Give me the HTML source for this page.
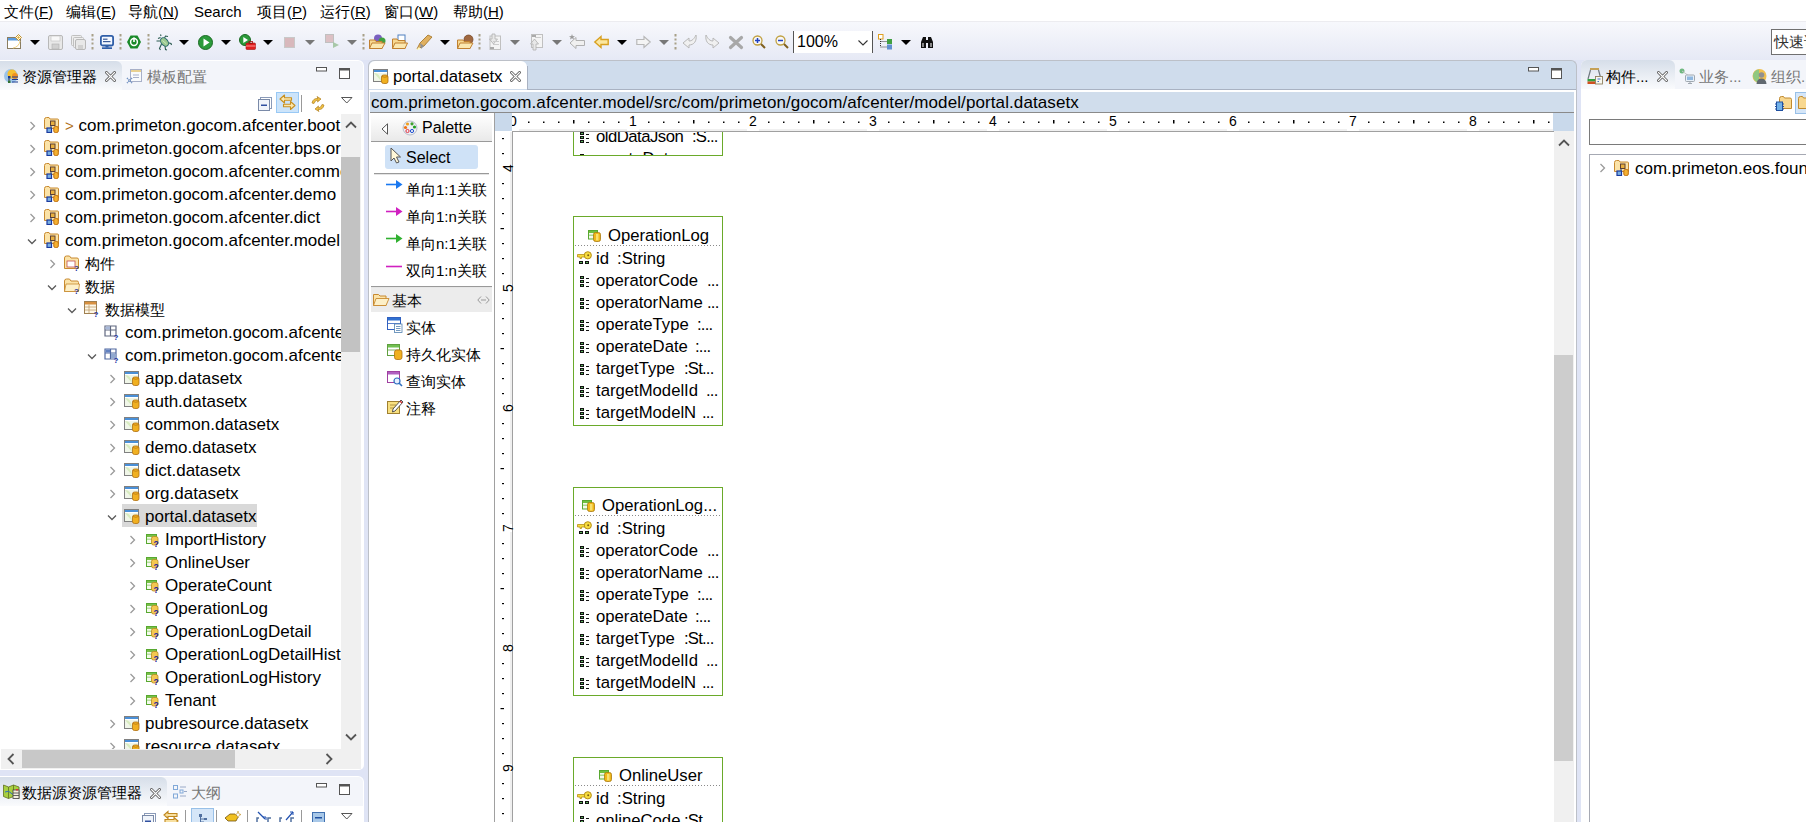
<!DOCTYPE html>
<html><head><meta charset="utf-8"><style>
*{margin:0;padding:0;box-sizing:border-box}
html,body{width:1806px;height:822px;overflow:hidden}
body{position:relative;background:#dfe4f5;font-family:"Liberation Sans",sans-serif;color:#000}
.a{position:absolute}
.t{position:absolute;white-space:nowrap}
svg{overflow:visible}
</style></head><body>
<div class="a" style="left:0px;top:0px;width:1806px;height:22px;background:#fff"></div>
<div class="a" style="left:0px;top:21px;width:1806px;height:1px;background:#ececf0"></div>
<div class="t" style="left:4px;top:4px;font-size:15px;line-height:15px;color:#000;">文件(<u>F</u>)</div>
<div class="t" style="left:66px;top:4px;font-size:15px;line-height:15px;color:#000;">编辑(<u>E</u>)</div>
<div class="t" style="left:128px;top:4px;font-size:15px;line-height:15px;color:#000;">导航(<u>N</u>)</div>
<div class="t" style="left:194px;top:4px;font-size:15px;line-height:15px;color:#000;">Search</div>
<div class="t" style="left:257px;top:4px;font-size:15px;line-height:15px;color:#000;">项目(<u>P</u>)</div>
<div class="t" style="left:320px;top:4px;font-size:15px;line-height:15px;color:#000;">运行(<u>R</u>)</div>
<div class="t" style="left:384px;top:4px;font-size:15px;line-height:15px;color:#000;">窗口(<u>W</u>)</div>
<div class="t" style="left:453px;top:4px;font-size:15px;line-height:15px;color:#000;">帮助(<u>H</u>)</div>
<div class="a" style="left:0px;top:22px;width:1806px;height:38px;background:linear-gradient(#f7f8fc,#e6e9f5)"></div>
<svg class="a" style="left:7px;top:34px" width="16" height="16" viewBox="0 0 16 16"><rect x="0.5" y="3.5" width="13" height="11" fill="#fff" stroke="#8a7d60"/><rect x="1" y="4" width="12" height="2.5" fill="#5b9be0"/><path d="M6 14 Q12 13 13 7" stroke="#f0d080" fill="none"/><path d="M11.5 0.5L14.5 3.5L11.5 6.5L8.5 3.5Z" fill="#fff8e0" stroke="#c09030" stroke-width="1"/><path d="M11.5 2V5M10 3.5H13" stroke="#e0b040" stroke-width=".8"/></svg>
<svg class="a" style="left:30px;top:40px" width="10" height="6" viewBox="0 0 10 6"><path d="M0 0H10L5 5Z" fill="#000"/></svg>
<svg class="a" style="left:48px;top:35px" width="15" height="15" viewBox="0 0 15 15"><rect x="0.5" y="0.5" width="14" height="14" rx="1.5" fill="#e8e8e8" stroke="#b8b8b8"/><rect x="3" y="1" width="9" height="5" fill="#f8f8f8" stroke="#c0c0c0" stroke-width=".6"/><rect x="4" y="9" width="7" height="5" fill="#d0d0d0" stroke="#b0b0b0" stroke-width=".6"/></svg>
<svg class="a" style="left:71px;top:35px" width="15" height="15" viewBox="0 0 15 15"><rect x="0.5" y="0.5" width="10" height="10" rx="1" fill="#eee" stroke="#c0c0c0"/><rect x="2.5" y="2.5" width="10" height="10" rx="1" fill="#eee" stroke="#c0c0c0"/><rect x="4.5" y="4.5" width="10" height="10" rx="1.5" fill="#e8e8e8" stroke="#b8b8b8"/><rect x="7" y="10" width="5" height="4" fill="#d0d0d0"/></svg>
<svg class="a" style="left:91px;top:34px" width="3" height="16" viewBox="0 0 3 16"><rect x="0.5" y="0" width="2" height="2.5" fill="#a8a088"/><rect x="0.5" y="4.5" width="2" height="2" fill="#a8a088"/><rect x="0.5" y="8.5" width="2" height="2" fill="#a8a088"/><rect x="0.5" y="13" width="2" height="2.5" fill="#a8a088"/></svg>
<svg class="a" style="left:100px;top:35px" width="14" height="14" viewBox="0 0 14 14"><rect x="0.9" y="0.9" width="12.2" height="9.6" rx="1.8" fill="#f4f8ff" stroke="#2f5ea8" stroke-width="1.8"/><rect x="3" y="3.6" width="4.5" height="1.2" fill="#3a5a98"/><rect x="3" y="6" width="7.5" height="1.2" fill="#3a5a98"/><rect x="5.5" y="11" width="3" height="1.5" fill="#2f5ea8"/><rect x="2" y="12.3" width="10" height="1.7" fill="#2f5ea8"/></svg>
<svg class="a" style="left:119px;top:34px" width="3" height="16" viewBox="0 0 3 16"><rect x="0.5" y="0" width="2" height="2.5" fill="#a8a088"/><rect x="0.5" y="4.5" width="2" height="2" fill="#a8a088"/><rect x="0.5" y="8.5" width="2" height="2" fill="#a8a088"/><rect x="0.5" y="13" width="2" height="2.5" fill="#a8a088"/></svg>
<svg class="a" style="left:127px;top:35px" width="14" height="14" viewBox="0 0 14 14"><path d="M3.5 0.5H10.5L14 7L10.5 13.5H3.5L0 7Z" fill="#1a8a2a"/><circle cx="7" cy="7" r="3.4" fill="none" stroke="#fff" stroke-width="1.5"/><rect x="6.2" y="2.5" width="1.6" height="4.5" fill="#fff"/></svg>
<svg class="a" style="left:147px;top:34px" width="3" height="16" viewBox="0 0 3 16"><rect x="0.5" y="0" width="2" height="2.5" fill="#a8a088"/><rect x="0.5" y="4.5" width="2" height="2" fill="#a8a088"/><rect x="0.5" y="8.5" width="2" height="2" fill="#a8a088"/><rect x="0.5" y="13" width="2" height="2.5" fill="#a8a088"/></svg>
<svg class="a" style="left:156px;top:34px" width="16" height="16" viewBox="0 0 16 16"><g stroke="#2a5a50" stroke-width="1.1" fill="none"><path d="M4.5 3.5L2 4.5M4 7L0.5 7M5.5 10L3.5 14.5L4.5 16M9 12L9.5 15.5L11 16M11 8.5L15 9.5L15.5 11M8 5L9.5 2L12 2.5M5 2L4.5 0.5"/></g><ellipse cx="8.5" cy="8" rx="3.3" ry="4.8" transform="rotate(-40 8.5 8)" fill="#9cc890" stroke="#2a6a70" stroke-width="1"/><path d="M6.5 6.5L10.5 10" stroke="#c8e8c0" stroke-width="1"/></svg>
<svg class="a" style="left:179px;top:40px" width="10" height="6" viewBox="0 0 10 6"><path d="M0 0H10L5 5Z" fill="#000"/></svg>
<svg class="a" style="left:198px;top:35px" width="15" height="15" viewBox="0 0 15 15"><circle cx="7.5" cy="7.5" r="7" fill="#2b9a3a" stroke="#1a6a22"/><path d="M5.5 3.5L11.5 7.5L5.5 11.5Z" fill="#fff"/></svg>
<svg class="a" style="left:221px;top:40px" width="10" height="6" viewBox="0 0 10 6"><path d="M0 0H10L5 5Z" fill="#000"/></svg>
<svg class="a" style="left:239px;top:34px" width="17" height="16" viewBox="0 0 17 16"><circle cx="6" cy="6" r="5.5" fill="#2b9a3a" stroke="#1a6a22"/><path d="M4.3 3L9 6L4.3 9Z" fill="#fff"/><rect x="7" y="9" width="9.5" height="6.5" rx="1" fill="#e02020" stroke="#a01010" stroke-width=".6"/><rect x="10" y="7.5" width="3.5" height="2" fill="none" stroke="#a01010" stroke-width=".8"/><rect x="7" y="11.5" width="9.5" height="1" fill="#ff9090"/></svg>
<svg class="a" style="left:263px;top:40px" width="10" height="6" viewBox="0 0 10 6"><path d="M0 0H10L5 5Z" fill="#000"/></svg>
<svg class="a" style="left:284px;top:37px" width="11" height="11" viewBox="0 0 11 11"><rect x="0.5" y="0.5" width="10" height="10" fill="#d8b8bc" stroke="#c8c8c8"/></svg>
<svg class="a" style="left:305px;top:40px" width="10" height="6" viewBox="0 0 10 6"><path d="M0 0H10L5 5Z" fill="#777"/></svg>
<svg class="a" style="left:325px;top:34px" width="15" height="15" viewBox="0 0 15 15"><rect x="0.5" y="0.5" width="8" height="8" fill="#dcc0c4" stroke="#c0c0c0"/><path d="M8 8L14 11L8 14Z" fill="#a8c8a8"/></svg>
<svg class="a" style="left:347px;top:40px" width="10" height="6" viewBox="0 0 10 6"><path d="M0 0H10L5 5Z" fill="#777"/></svg>
<svg class="a" style="left:362px;top:34px" width="3" height="16" viewBox="0 0 3 16"><rect x="0.5" y="0" width="2" height="2.5" fill="#a8a088"/><rect x="0.5" y="4.5" width="2" height="2" fill="#a8a088"/><rect x="0.5" y="8.5" width="2" height="2" fill="#a8a088"/><rect x="0.5" y="13" width="2" height="2.5" fill="#a8a088"/></svg>
<svg class="a" style="left:369px;top:34px" width="17" height="15" viewBox="0 0 17 15"><circle cx="9" cy="4.5" r="4" fill="#7a60c0"/><circle cx="13" cy="7" r="3.5" fill="#40a040"/><path d="M0.5 6H6L7 7.5H13V14.5H0.5Z" fill="#f7d890" stroke="#c08030"/><path d="M0.5 14.5L3 9H16L13 14.5Z" fill="#fbe8b0" stroke="#c08030"/></svg>
<svg class="a" style="left:392px;top:34px" width="16" height="15" viewBox="0 0 16 15"><rect x="6" y="1" width="7" height="7" fill="#fff" stroke="#5080c0"/><path d="M0.5 5H5L6 6.5H13V14.5H0.5Z" fill="#f7d890" stroke="#c08030"/><path d="M0.5 14.5L3 9H15.5L13 14.5Z" fill="#fbe8b0" stroke="#c08030"/></svg>
<svg class="a" style="left:416px;top:34px" width="17" height="16" viewBox="0 0 17 16"><path d="M1 15L4 9L12 1L16 3L8 12Z" fill="#e0b060" stroke="#a07020" stroke-width=".8"/><path d="M4 9L8 12L5 15Z" fill="#909090"/><path d="M0 16L3 13L5 15Z" fill="#fff8c0"/></svg>
<svg class="a" style="left:440px;top:40px" width="10" height="6" viewBox="0 0 10 6"><path d="M0 0H10L5 5Z" fill="#000"/></svg>
<svg class="a" style="left:457px;top:34px" width="17" height="15" viewBox="0 0 17 15"><circle cx="11.5" cy="5.5" r="4.5" fill="#a06840" stroke="#704020" stroke-width=".7"/><path d="M0.5 6H6L7 7.5H13V14.5H0.5Z" fill="#f7d890" stroke="#c08030"/><path d="M0.5 14.5L3 9H16L13 14.5Z" fill="#fbe8b0" stroke="#c08030"/></svg>
<svg class="a" style="left:478px;top:34px" width="3" height="16" viewBox="0 0 3 16"><rect x="0.5" y="0" width="2" height="2.5" fill="#a8a088"/><rect x="0.5" y="4.5" width="2" height="2" fill="#a8a088"/><rect x="0.5" y="8.5" width="2" height="2" fill="#a8a088"/><rect x="0.5" y="13" width="2" height="2.5" fill="#a8a088"/></svg>
<svg class="a" style="left:487px;top:34px" width="14" height="16" viewBox="0 0 14 16"><rect x="3" y="2" width="10.5" height="13.5" fill="#f4f4f4" stroke="#c0c0c0"/><path d="M5 0H8V5H10.5L6.5 10L2.5 5H5Z" fill="#e8e8e8" stroke="#b0b0b0" stroke-width=".8"/><rect x="6" y="7" width="6" height="1" fill="#ccc"/><rect x="6" y="10" width="6" height="1" fill="#ccc"/><rect x="3" y="13" width="4" height="2" fill="#aaa"/></svg>
<svg class="a" style="left:510px;top:40px" width="10" height="6" viewBox="0 0 10 6"><path d="M0 0H10L5 5Z" fill="#777"/></svg>
<svg class="a" style="left:529px;top:34px" width="14" height="16" viewBox="0 0 14 16"><rect x="2.5" y="0.5" width="11" height="13" fill="#f4f4f4" stroke="#c0c0c0"/><path d="M4 16V10H1.5L5.5 5L9.5 10H7V16Z" fill="#e8e8e8" stroke="#b0b0b0" stroke-width=".8"/><rect x="6" y="3" width="6" height="1" fill="#ccc"/><rect x="3" y="1" width="4" height="2" fill="#aaa"/></svg>
<svg class="a" style="left:552px;top:40px" width="10" height="6" viewBox="0 0 10 6"><path d="M0 0H10L5 5Z" fill="#777"/></svg>
<svg class="a" style="left:569px;top:34px" width="16" height="16" viewBox="0 0 16 16"><path d="M1 9L7 3.5V6.5H15.5V11.5H7V14.5Z" fill="#f0f0f0" stroke="#b0b0b0"/><path d="M3 0L3.8 2.2L6 2L4.3 3.4L5 5.5L3 4.3L1 5.5L1.7 3.4L0 2L2.2 2.2Z" fill="#999"/></svg>
<svg class="a" style="left:594px;top:35px" width="15" height="14" viewBox="0 0 15 14"><path d="M0.8 7L7 1.5V4.5H14.2V9.5H7V12.5Z" fill="#fbe7a0" stroke="#d8a020" stroke-width="1.4"/></svg>
<svg class="a" style="left:617px;top:40px" width="10" height="6" viewBox="0 0 10 6"><path d="M0 0H10L5 5Z" fill="#000"/></svg>
<svg class="a" style="left:636px;top:35px" width="15" height="14" viewBox="0 0 15 14"><path d="M14.2 7L8 1.5V4.5H0.8V9.5H8V12.5Z" fill="#f4f4f4" stroke="#b8b8b8" stroke-width="1.2"/></svg>
<svg class="a" style="left:659px;top:40px" width="10" height="6" viewBox="0 0 10 6"><path d="M0 0H10L5 5Z" fill="#777"/></svg>
<svg class="a" style="left:674px;top:34px" width="3" height="16" viewBox="0 0 3 16"><rect x="0.5" y="0" width="2" height="2.5" fill="#a8a088"/><rect x="0.5" y="4.5" width="2" height="2" fill="#a8a088"/><rect x="0.5" y="8.5" width="2" height="2" fill="#a8a088"/><rect x="0.5" y="13" width="2" height="2.5" fill="#a8a088"/></svg>
<svg class="a" style="left:682px;top:34px" width="16" height="16" viewBox="0 0 16 16"><path d="M14 1C15 7 12 11 7 11V14L1 9L7 4V7C10 7 12 5 14 1Z" fill="#f0f0f0" stroke="#b8b8b8"/></svg>
<svg class="a" style="left:704px;top:34px" width="16" height="16" viewBox="0 0 16 16"><path d="M2 1C1 7 4 11 9 11V14L15 9L9 4V7C6 7 4 5 2 1Z" fill="#f0f0f0" stroke="#b8b8b8"/></svg>
<svg class="a" style="left:729px;top:36px" width="14" height="13" viewBox="0 0 14 13"><path d="M1.5 1.5L12.5 11.5M12.5 1.5L1.5 11.5" stroke="#a8a8a8" stroke-width="3.2" stroke-linecap="round"/></svg>
<svg class="a" style="left:752px;top:35px" width="14" height="14" viewBox="0 0 14 14"><circle cx="5.5" cy="5.5" r="4.5" fill="#f8f8f8" stroke="#c0a040" stroke-width="1.3"/><path d="M3 5.5H8M5.5 3V8" stroke="#2040c0" stroke-width="1.5"/><path d="M9 9L13 13" stroke="#806020" stroke-width="2"/></svg>
<svg class="a" style="left:775px;top:35px" width="14" height="14" viewBox="0 0 14 14"><circle cx="5.5" cy="5.5" r="4.5" fill="#f8f8f8" stroke="#c0a040" stroke-width="1.3"/><path d="M3 5.5H8" stroke="#2040c0" stroke-width="1.5"/><path d="M9 9L13 13" stroke="#806020" stroke-width="2"/></svg>
<div class="a" style="left:793px;top:31px;width:1px;height:22px;background:#555"></div>
<div class="a" style="left:794px;top:31px;width:78px;height:22px;background:#fff"></div>
<div class="t" style="left:797px;top:34px;font-size:16px;line-height:16px;color:#000;">100%</div>
<svg class="a" style="left:858px;top:40px" width="10" height="6" viewBox="0 0 10 6"><path d="M0.5 0.5L5 5L9.5 0.5" stroke="#333" fill="none" stroke-width="1.1"/></svg>
<div class="a" style="left:872px;top:31px;width:1px;height:22px;background:#555"></div>
<svg class="a" style="left:878px;top:34px" width="15" height="16" viewBox="0 0 15 16"><rect x="0.5" y="0.5" width="4.5" height="4.5" fill="#fff" stroke="#e0a020"/><rect x="9" y="5" width="5" height="5" fill="#40a040"/><rect x="9" y="10.5" width="5" height="5" fill="#6090d0"/><path d="M2.5 5V13H9M2.5 7.5H9" stroke="#333" stroke-dasharray="1 1" fill="none"/></svg>
<svg class="a" style="left:901px;top:40px" width="10" height="6" viewBox="0 0 10 6"><path d="M0 0H10L5 5Z" fill="#000"/></svg>
<svg class="a" style="left:920px;top:36px" width="14" height="12" viewBox="0 0 14 12"><path d="M1 12V6L3 1H6V12ZM8 12V1H11L13 6V12Z" fill="#111"/><rect x="5" y="4" width="4" height="3" fill="#111"/><rect x="2" y="7" width="2" height="4" fill="#888"/><rect x="10" y="7" width="2" height="4" fill="#888"/></svg>
<div class="a" style="left:1771px;top:29px;width:40px;height:26px;background:#fff;border:1px solid #707070"></div>
<div class="t" style="left:1774px;top:34px;font-size:15px;line-height:15px;color:#333;">快速访问</div>
<svg width="0" height="0" style="position:absolute"><defs>
<symbol id="proj" viewBox="0 0 16 16"><path d="M0.5 2.5Q0.5 0.5 2.5 0.5H5L6 2H13.5Q14.5 2 14.5 3V11.5H0.5Z" fill="#fbe3a8" stroke="#c88a30"/><rect x="6.5" y="4" width="4.5" height="4.5" fill="#e8b040" stroke="#604030"/><rect x="3" y="11" width="4.5" height="4.5" fill="#7ab0e0" stroke="#1a3aa0" stroke-width="1.2"/><rect x="9.8" y="9.5" width="4.5" height="6" rx="1.5" fill="#f4b030" stroke="#c07010"/><path d="M7 8.5V11" stroke="#204080"/></symbol>
<symbol id="fold" viewBox="0 0 16 16"><path d="M0.5 3Q0.5 1 2.5 1H5.5L7 3H13Q14.5 3 14.5 4.5V13.5H0.5Z" fill="#fbe3a8" stroke="#c88a30"/><path d="M0.5 13.5L2 6H15.5L14.5 13.5Z" fill="#fdf0c8" stroke="#c88a30" stroke-width=".8"/><text x="10" y="15.5" font-size="8" font-weight="bold" fill="#2030a0" font-family="Liberation Sans">?</text></symbol>
<symbol id="foldc" viewBox="0 0 16 16"><path d="M0.5 3Q0.5 1 2.5 1H5.5L7 3H13Q14.5 3 14.5 4.5V13.5H0.5Z" fill="#fbe3a8" stroke="#c88a30"/><rect x="3" y="6" width="8" height="6" fill="#fff" stroke="#c05050" stroke-width=".8"/><text x="10" y="15.5" font-size="8" font-weight="bold" fill="#2030a0" font-family="Liberation Sans">?</text></symbol>
<symbol id="dm" viewBox="0 0 16 16"><rect x="0.5" y="0.5" width="12" height="12" fill="#fdf8e8" stroke="#a08050"/><rect x="1" y="1" width="11" height="2.5" fill="#d89040"/><path d="M1 6H12M1 9H12M5 3.5V12" stroke="#c0a070" stroke-width=".8"/><text x="9.5" y="15.5" font-size="8" font-weight="bold" fill="#2030a0" font-family="Liberation Sans">?</text></symbol>
<symbol id="pkg" viewBox="0 0 16 16"><path d="M1 2H12V12H1ZM1 6H12M6.5 2V12" fill="none" stroke="#606880" stroke-width="1.2"/><rect x="1.5" y="2.5" width="4.5" height="3" fill="#a8b8d8"/><text x="9.5" y="15.5" font-size="8" font-weight="bold" fill="#2030a0" font-family="Liberation Sans">?</text></symbol>
<symbol id="pkgb" viewBox="0 0 16 16"><path d="M1 2H12V12H1ZM1 6H12M6.5 2V12" fill="none" stroke="#5068a0" stroke-width="1.2"/><rect x="1.5" y="2.5" width="4.5" height="3" fill="#6080c0"/><rect x="7" y="6.5" width="4.5" height="5" fill="#90a8d0"/><text x="9.5" y="15.5" font-size="8" font-weight="bold" fill="#2030a0" font-family="Liberation Sans">?</text></symbol>
<symbol id="ds" viewBox="0 0 16 16"><rect x="0.5" y="1.5" width="14" height="12" fill="#f0f6e8" stroke="#808080"/><rect x="1" y="2" width="13" height="2" fill="#4a90d8"/><rect x="1" y="4" width="13" height="1" fill="#fff"/><path d="M1 5Q7 5 8 13" fill="#d8ecc0" stroke="none"/><rect x="8.5" y="7" width="6.5" height="8.5" rx="2" fill="#f0b020" stroke="#b07010" stroke-width=".8"/><path d="M8.8 8.5Q11.7 10 14.8 8.5" stroke="#b07010" fill="none" stroke-width=".7"/></symbol>
<symbol id="ent" viewBox="0 0 16 16"><rect x="2.5" y="3.5" width="10" height="9" fill="#f4faec" stroke="#58a830"/><rect x="3" y="4" width="9" height="2" fill="#78c048"/><rect x="3" y="7.5" width="9" height="1.5" fill="#b8e0a0"/><rect x="7.5" y="5.5" width="6.5" height="8.5" rx="2" fill="#f4c850" stroke="#b88a20" stroke-width=".8"/><text x="9.6" y="15.8" font-size="8.5" font-weight="bold" fill="#1a20a0" font-family="Liberation Sans">?</text></symbol>
<symbol id="entd" viewBox="0 0 16 16"><rect x="0.5" y="0.5" width="12" height="10" fill="#f0f8e8" stroke="#60a040"/><rect x="1" y="1" width="11" height="2.5" fill="#80c060"/><path d="M1 6H12" stroke="#80b060" stroke-width=".8"/><rect x="7" y="5" width="7" height="9.5" rx="2" fill="#f0b020" stroke="#b07010" stroke-width=".8"/><path d="M7.3 6.8Q10.5 8.3 13.7 6.8" stroke="#b07010" fill="none" stroke-width=".7"/></symbol>
<symbol id="chev" viewBox="0 0 8 10"><path d="M1.5 1L5.5 5L1.5 9" fill="none" stroke="#9a9a9a" stroke-width="1.3"/></symbol>
<symbol id="chevd" viewBox="0 0 10 8"><path d="M1 1.5L5 5.5L9 1.5" fill="none" stroke="#5a5a5a" stroke-width="1.3"/></symbol>
<symbol id="attr" viewBox="0 0 14 14"><rect x="0.5" y="0.5" width="3" height="3" fill="#202020"/><rect x="0.5" y="5" width="3" height="3" fill="#202020"/><rect x="0.5" y="9.5" width="3" height="3" fill="#202020"/><rect x="1.3" y="1.3" width="1.4" height="1.4" fill="#3a9a3a"/><rect x="1.3" y="5.8" width="1.4" height="1.4" fill="#3a9a3a"/><rect x="1.3" y="10.3" width="1.4" height="1.4" fill="#3a9a3a"/><rect x="5" y="1.5" width="2" height="1.2" fill="#333"/><rect x="5" y="6" width="2" height="1.2" fill="#333"/><rect x="5" y="10.5" width="2" height="1.2" fill="#333"/></symbol>
<symbol id="key" viewBox="0 0 16 16"><circle cx="11" cy="5.5" r="4.3" fill="#f4d040" stroke="#b08010"/><circle cx="11.5" cy="5" r="1.3" fill="#806010"/><path d="M0.5 5.5H7.5V7.5H0.5Z" fill="#f4d040" stroke="#b08010" stroke-width=".8"/><rect x="0.5" y="10" width="3" height="3" fill="#202020"/><rect x="5" y="10" width="3" height="3" fill="#202020"/><rect x="1.3" y="10.8" width="1.4" height="1.4" fill="#3a9a3a"/><rect x="5.8" y="10.8" width="1.4" height="1.4" fill="#3a9a3a"/></symbol>
<symbol id="xclose" viewBox="0 0 11 11"><path d="M1.5 1.5L9.5 9.5M9.5 1.5L1.5 9.5" stroke="#606060" stroke-width="2.8" stroke-linecap="square"/><path d="M1.5 1.5L9.5 9.5M9.5 1.5L1.5 9.5" stroke="#fff" stroke-width="1.1" stroke-linecap="square"/></symbol>
<symbol id="minb" viewBox="0 0 12 12"><rect x="0.5" y="0.5" width="10" height="3.5" fill="#fff" stroke="#555"/></symbol>
<symbol id="maxb" viewBox="0 0 12 12"><rect x="0.5" y="0.5" width="10" height="10" fill="#fff" stroke="#555"/><rect x="0.5" y="0.5" width="10" height="2" fill="#555"/></symbol>
</defs></svg>
<div class="a" style="left:0px;top:60px;width:364px;height:710px;background:#fff;border-radius:0 6px 5px 0;overflow:hidden"></div>
<div class="a" style="left:0px;top:61px;width:363px;height:29px;background:#f3f5fa;border-radius:0 5px 0 0"></div>
<div class="a" style="left:0px;top:61px;width:122px;height:29px;background:linear-gradient(#d6dee9,#fafbfd);border-radius:0 6px 0 0"></div>
<svg class="a" style="left:3px;top:68px" width="16" height="16" viewBox="0 0 16 16"><circle cx="8" cy="8" r="7" fill="#9cc4ea"/><circle cx="9" cy="6" r="4.5" fill="#f7c030"/><circle cx="12" cy="8" r="3" fill="#f09020"/><rect x="5" y="8" width="2.5" height="2.5" fill="#1a3a90"/><rect x="5" y="12.5" width="2.5" height="2.5" fill="#307030"/><path d="M6 10.5V12.5" stroke="#222"/><path d="M9 9H15M9 11.5H15M9 14H15" stroke="#1a3a90" stroke-width="1.2"/></svg>
<div class="t" style="left:22px;top:69px;font-size:15px;line-height:15px;color:#000;">资源管理器</div>
<svg class="a" style="left:105px;top:71px" width="11" height="11"><use href="#xclose"/></svg>
<svg class="a" style="left:126px;top:68px" width="16" height="16" viewBox="0 0 16 16"><rect x="4.5" y="1.5" width="11" height="12" fill="#f8fafc" stroke="#a8b0c8"/><rect x="5" y="2" width="10" height="2" fill="#e8d090"/><path d="M7 7H13M7 9.5H13" stroke="#a8b0c8"/><path d="M1 10L6 15M6 10L1 15" stroke="#7090c0" stroke-width="1.5" stroke-dasharray="1.2 .8"/></svg>
<div class="t" style="left:147px;top:69px;font-size:15px;line-height:15px;color:#777;">模板配置</div>
<svg class="a" style="left:316px;top:67px" width="12" height="12"><use href="#minb"/></svg>
<svg class="a" style="left:339px;top:68px" width="12" height="12"><use href="#maxb"/></svg>
<svg class="a" style="left:258px;top:97px" width="14" height="14" viewBox="0 0 14 14"><rect x="2.5" y="0.5" width="11" height="11" fill="#fff" stroke="#8a9ab8"/><rect x="0.5" y="2.5" width="11" height="11" fill="#f0f4fa" stroke="#7a8aa8"/><rect x="3" y="7.5" width="6" height="1.5" fill="#3050a0"/></svg>
<div class="a" style="left:276px;top:92px;width:23px;height:21px;background:#cce4fa;border:1px solid #99c9f5"></div>
<svg class="a" style="left:279px;top:94px" width="17" height="17" viewBox="0 0 17 17"><path d="M1 5L5.5 1V3.8H12.5V6.2H5.5V9Z" fill="#fbe8b0" stroke="#c89020" stroke-width="1.1" stroke-linejoin="round"/><path d="M16 11.5L11.5 7.5V10.3H4.5V12.7H11.5V15.5Z" fill="#fbe8b0" stroke="#c89020" stroke-width="1.1" stroke-linejoin="round"/></svg>
<div class="a" style="left:301px;top:95px;width:1px;height:17px;background:#999"></div>
<svg class="a" style="left:310px;top:96px" width="16" height="16" viewBox="0 0 16 16"><path d="M2 7Q3 2 8 2.5L7 0.5L11 3L7.5 6L8 4Q5 4 4 7.5Z" fill="#f0c040" stroke="#b08020" stroke-width=".7"/><path d="M14 9Q13 14 8 13.5L9 15.5L5 13L8.5 10L8 12Q11 12 12 8.5Z" fill="#f0c040" stroke="#b08020" stroke-width=".7"/></svg>
<svg class="a" style="left:341px;top:97px" width="12" height="8" viewBox="0 0 12 8"><path d="M0.5 0.5H11L5.75 6Z" fill="#fff" stroke="#555"/></svg>
<div class="a" style="left:341px;top:114px;width:20px;height:635px;background:#f0f0f0"></div>
<div class="a" style="left:341px;top:157px;width:19px;height:195px;background:#c2c2c2"></div>
<svg class="a" style="left:345px;top:121px" width="12" height="8" viewBox="0 0 12 8"><path d="M1 6.5L6 1.5L11 6.5" fill="none" stroke="#555" stroke-width="1.8"/></svg>
<svg class="a" style="left:345px;top:733px" width="12" height="8" viewBox="0 0 12 8"><path d="M1 1.5L6 6.5L11 1.5" fill="none" stroke="#555" stroke-width="1.8"/></svg>
<div class="a" style="left:1px;top:749px;width:360px;height:20px;background:#f0f0f0"></div>
<div class="a" style="left:22px;top:750px;width:213px;height:18px;background:#c8c8c8"></div>
<svg class="a" style="left:7px;top:753px" width="8" height="12" viewBox="0 0 8 12"><path d="M6.5 1L1.5 6L6.5 11" fill="none" stroke="#555" stroke-width="1.8"/></svg>
<svg class="a" style="left:325px;top:753px" width="8" height="12" viewBox="0 0 8 12"><path d="M1.5 1L6.5 6L1.5 11" fill="none" stroke="#555" stroke-width="1.8"/></svg>
<div class="a" style="left:0;top:114px;width:341px;height:635px;overflow:hidden">
<svg class="a" style="left:29px;top:7px" width="8" height="10"><use href="#chev"/></svg>
<svg class="a" style="left:44px;top:3px" width="16" height="16"><use href="#proj"/></svg>
<div class="t" style="left:65px;top:3px;font-size:17px;line-height:17px;color:#000;"><span style="color:#b07020;font-size:15px">&gt;</span> com.primeton.gocom.afcenter.boot</div>
<svg class="a" style="left:29px;top:30px" width="8" height="10"><use href="#chev"/></svg>
<svg class="a" style="left:44px;top:26px" width="16" height="16"><use href="#proj"/></svg>
<div class="t" style="left:65px;top:26px;font-size:17px;line-height:17px;color:#000;">com.primeton.gocom.afcenter.bps.org</div>
<svg class="a" style="left:29px;top:53px" width="8" height="10"><use href="#chev"/></svg>
<svg class="a" style="left:44px;top:49px" width="16" height="16"><use href="#proj"/></svg>
<div class="t" style="left:65px;top:49px;font-size:17px;line-height:17px;color:#000;">com.primeton.gocom.afcenter.common</div>
<svg class="a" style="left:29px;top:76px" width="8" height="10"><use href="#chev"/></svg>
<svg class="a" style="left:44px;top:72px" width="16" height="16"><use href="#proj"/></svg>
<div class="t" style="left:65px;top:72px;font-size:17px;line-height:17px;color:#000;">com.primeton.gocom.afcenter.demo</div>
<svg class="a" style="left:29px;top:99px" width="8" height="10"><use href="#chev"/></svg>
<svg class="a" style="left:44px;top:95px" width="16" height="16"><use href="#proj"/></svg>
<div class="t" style="left:65px;top:95px;font-size:17px;line-height:17px;color:#000;">com.primeton.gocom.afcenter.dict</div>
<svg class="a" style="left:27px;top:124px" width="10" height="8"><use href="#chevd"/></svg>
<svg class="a" style="left:44px;top:118px" width="16" height="16"><use href="#proj"/></svg>
<div class="t" style="left:65px;top:118px;font-size:17px;line-height:17px;color:#000;">com.primeton.gocom.afcenter.model</div>
<svg class="a" style="left:49px;top:145px" width="8" height="10"><use href="#chev"/></svg>
<svg class="a" style="left:64px;top:141px" width="16" height="16"><use href="#foldc"/></svg>
<div class="t" style="left:85px;top:142px;font-size:15px;line-height:15px;color:#000;">构件</div>
<svg class="a" style="left:47px;top:170px" width="10" height="8"><use href="#chevd"/></svg>
<svg class="a" style="left:64px;top:164px" width="16" height="16"><use href="#fold"/></svg>
<div class="t" style="left:85px;top:165px;font-size:15px;line-height:15px;color:#000;">数据</div>
<svg class="a" style="left:67px;top:193px" width="10" height="8"><use href="#chevd"/></svg>
<svg class="a" style="left:84px;top:187px" width="16" height="16"><use href="#dm"/></svg>
<div class="t" style="left:105px;top:188px;font-size:15px;line-height:15px;color:#000;">数据模型</div>
<svg class="a" style="left:104px;top:210px" width="16" height="16"><use href="#pkg"/></svg>
<div class="t" style="left:125px;top:210px;font-size:17px;line-height:17px;color:#000;">com.primeton.gocom.afcenter.model</div>
<svg class="a" style="left:87px;top:239px" width="10" height="8"><use href="#chevd"/></svg>
<svg class="a" style="left:104px;top:233px" width="16" height="16"><use href="#pkgb"/></svg>
<div class="t" style="left:125px;top:233px;font-size:17px;line-height:17px;color:#000;">com.primeton.gocom.afcenter.model</div>
<svg class="a" style="left:109px;top:260px" width="8" height="10"><use href="#chev"/></svg>
<svg class="a" style="left:124px;top:256px" width="16" height="16"><use href="#ds"/></svg>
<div class="t" style="left:145px;top:256px;font-size:17px;line-height:17px;color:#000;">app.datasetx</div>
<svg class="a" style="left:109px;top:283px" width="8" height="10"><use href="#chev"/></svg>
<svg class="a" style="left:124px;top:279px" width="16" height="16"><use href="#ds"/></svg>
<div class="t" style="left:145px;top:279px;font-size:17px;line-height:17px;color:#000;">auth.datasetx</div>
<svg class="a" style="left:109px;top:306px" width="8" height="10"><use href="#chev"/></svg>
<svg class="a" style="left:124px;top:302px" width="16" height="16"><use href="#ds"/></svg>
<div class="t" style="left:145px;top:302px;font-size:17px;line-height:17px;color:#000;">common.datasetx</div>
<svg class="a" style="left:109px;top:329px" width="8" height="10"><use href="#chev"/></svg>
<svg class="a" style="left:124px;top:325px" width="16" height="16"><use href="#ds"/></svg>
<div class="t" style="left:145px;top:325px;font-size:17px;line-height:17px;color:#000;">demo.datasetx</div>
<svg class="a" style="left:109px;top:352px" width="8" height="10"><use href="#chev"/></svg>
<svg class="a" style="left:124px;top:348px" width="16" height="16"><use href="#ds"/></svg>
<div class="t" style="left:145px;top:348px;font-size:17px;line-height:17px;color:#000;">dict.datasetx</div>
<svg class="a" style="left:109px;top:375px" width="8" height="10"><use href="#chev"/></svg>
<svg class="a" style="left:124px;top:371px" width="16" height="16"><use href="#ds"/></svg>
<div class="t" style="left:145px;top:371px;font-size:17px;line-height:17px;color:#000;">org.datasetx</div>
<div class="a" style="left:122px;top:390px;width:135px;height:23px;background:#d9d9d9"></div>
<svg class="a" style="left:107px;top:400px" width="10" height="8"><use href="#chevd"/></svg>
<svg class="a" style="left:124px;top:394px" width="16" height="16"><use href="#ds"/></svg>
<div class="t" style="left:145px;top:394px;font-size:17px;line-height:17px;color:#000;">portal.datasetx</div>
<svg class="a" style="left:129px;top:421px" width="8" height="10"><use href="#chev"/></svg>
<svg class="a" style="left:144px;top:417px" width="16" height="16"><use href="#ent"/></svg>
<div class="t" style="left:165px;top:417px;font-size:17px;line-height:17px;color:#000;">ImportHistory</div>
<svg class="a" style="left:129px;top:444px" width="8" height="10"><use href="#chev"/></svg>
<svg class="a" style="left:144px;top:440px" width="16" height="16"><use href="#ent"/></svg>
<div class="t" style="left:165px;top:440px;font-size:17px;line-height:17px;color:#000;">OnlineUser</div>
<svg class="a" style="left:129px;top:467px" width="8" height="10"><use href="#chev"/></svg>
<svg class="a" style="left:144px;top:463px" width="16" height="16"><use href="#ent"/></svg>
<div class="t" style="left:165px;top:463px;font-size:17px;line-height:17px;color:#000;">OperateCount</div>
<svg class="a" style="left:129px;top:490px" width="8" height="10"><use href="#chev"/></svg>
<svg class="a" style="left:144px;top:486px" width="16" height="16"><use href="#ent"/></svg>
<div class="t" style="left:165px;top:486px;font-size:17px;line-height:17px;color:#000;">OperationLog</div>
<svg class="a" style="left:129px;top:513px" width="8" height="10"><use href="#chev"/></svg>
<svg class="a" style="left:144px;top:509px" width="16" height="16"><use href="#ent"/></svg>
<div class="t" style="left:165px;top:509px;font-size:17px;line-height:17px;color:#000;">OperationLogDetail</div>
<svg class="a" style="left:129px;top:536px" width="8" height="10"><use href="#chev"/></svg>
<svg class="a" style="left:144px;top:532px" width="16" height="16"><use href="#ent"/></svg>
<div class="t" style="left:165px;top:532px;font-size:17px;line-height:17px;color:#000;">OperationLogDetailHistory</div>
<svg class="a" style="left:129px;top:559px" width="8" height="10"><use href="#chev"/></svg>
<svg class="a" style="left:144px;top:555px" width="16" height="16"><use href="#ent"/></svg>
<div class="t" style="left:165px;top:555px;font-size:17px;line-height:17px;color:#000;">OperationLogHistory</div>
<svg class="a" style="left:129px;top:582px" width="8" height="10"><use href="#chev"/></svg>
<svg class="a" style="left:144px;top:578px" width="16" height="16"><use href="#ent"/></svg>
<div class="t" style="left:165px;top:578px;font-size:17px;line-height:17px;color:#000;">Tenant</div>
<svg class="a" style="left:109px;top:605px" width="8" height="10"><use href="#chev"/></svg>
<svg class="a" style="left:124px;top:601px" width="16" height="16"><use href="#ds"/></svg>
<div class="t" style="left:145px;top:601px;font-size:17px;line-height:17px;color:#000;">pubresource.datasetx</div>
<svg class="a" style="left:109px;top:628px" width="8" height="10"><use href="#chev"/></svg>
<svg class="a" style="left:124px;top:624px" width="16" height="16"><use href="#ds"/></svg>
<div class="t" style="left:145px;top:624px;font-size:17px;line-height:17px;color:#000;">resource.datasetx</div>
</div>
<div class="a" style="left:0px;top:776px;width:364px;height:46px;background:#fff;border-radius:0 6px 0 0;overflow:hidden"></div>
<div class="a" style="left:0px;top:777px;width:363px;height:29px;background:#f3f5fa;border-radius:0 5px 0 0"></div>
<div class="a" style="left:0px;top:777px;width:167px;height:29px;background:linear-gradient(#d6dee9,#fafbfd);border-radius:0 6px 0 0"></div>
<svg class="a" style="left:3px;top:784px" width="17" height="15" viewBox="0 0 17 15"><path d="M0.5 1L5.5 3L10.5 1L16 3V14.5L10.5 12.5L5.5 14.5L0.5 12.5Z" fill="#a8d040" stroke="#607020" stroke-width=".8"/><path d="M5.5 3V14.5M10.5 1V12.5" stroke="#607020" stroke-width=".8"/><path d="M2 8Q6 6 8 9T14 8" stroke="#3070c0" fill="none"/><rect x="10" y="6" width="6" height="8.5" fill="#f4f0e0" stroke="#404040" stroke-width=".8"/><path d="M10 9H16M10 11.5H16" stroke="#404040" stroke-width=".8"/><rect x="13" y="5" width="2" height="1.5" fill="#e03030"/></svg>
<div class="t" style="left:22px;top:785px;font-size:15px;line-height:15px;color:#000;">数据源资源管理器</div>
<svg class="a" style="left:150px;top:788px" width="11" height="11"><use href="#xclose"/></svg>
<svg class="a" style="left:173px;top:785px" width="14" height="14" viewBox="0 0 14 14"><rect x="0.5" y="0.5" width="4" height="4" fill="none" stroke="#80a8d8"/><rect x="0.5" y="9" width="4" height="4" fill="none" stroke="#80a8d8"/><rect x="7" y="5" width="3" height="3" fill="none" stroke="#80a8d8"/><path d="M7 2H13M11 6.5H14M7 11H13" stroke="#9aaac8"/></svg>
<div class="t" style="left:191px;top:785px;font-size:15px;line-height:15px;color:#777;">大纲</div>
<svg class="a" style="left:316px;top:783px" width="12" height="12"><use href="#minb"/></svg>
<svg class="a" style="left:339px;top:784px" width="12" height="12"><use href="#maxb"/></svg>
<svg class="a" style="left:142px;top:813px" width="14" height="12" viewBox="0 0 14 12"><rect x="2.5" y="0.5" width="11" height="11" fill="#fff" stroke="#8a9ab8"/><rect x="0.5" y="2.5" width="11" height="11" fill="#f0f4fa" stroke="#7a8aa8"/><rect x="3" y="7.5" width="6" height="1.5" fill="#3050a0"/></svg>
<svg class="a" style="left:163px;top:810px" width="16" height="14" viewBox="0 0 16 14"><path d="M1 5L5 1.5V3.5H14V6.5H5V8.5Z" fill="#f8e0a0" stroke="#c08820" stroke-width="1.1"/><path d="M15 11L11 7.5V9.5H2V12.5H11V14.5Z" fill="#f8e0a0" stroke="#c08820" stroke-width="1.1"/></svg>
<div class="a" style="left:185px;top:810px;width:1px;height:12px;background:#999"></div>
<div class="a" style="left:191px;top:808px;width:23px;height:14px;background:#d5e6f8;border:1px solid #98c0e8;border-bottom:none"></div>
<svg class="a" style="left:199px;top:814px" width="8" height="8" viewBox="0 0 8 8"><rect x="0" y="0" width="3" height="3" fill="#5070a0"/><path d="M1.5 3V8M1.5 5H5M1.5 8H5" stroke="#5070a0"/><rect x="5" y="4" width="3" height="2" fill="#5070a0"/></svg>
<div class="a" style="left:216px;top:810px;width:1px;height:12px;background:#999"></div>
<svg class="a" style="left:225px;top:811px" width="16" height="11" viewBox="0 0 16 11"><path d="M0 7L5 3H10L13 6L11 10H3Z" fill="#f0c020" stroke="#705010" stroke-width=".8"/><path d="M13 0L14 3L16 3.5L14 4.5L13 7L12 4.5L10 3.5L12 3Z" fill="#fff" stroke="#c09020" stroke-width=".6"/></svg>
<div class="a" style="left:247px;top:810px;width:1px;height:12px;background:#999"></div>
<svg class="a" style="left:256px;top:811px" width="16" height="11" viewBox="0 0 16 11"><path d="M2 1L9 8" stroke="#2050b0" stroke-width="1.2"/><path d="M7 6H10V9" stroke="#2050b0" fill="none"/><path d="M1 11V7H3M12 11V7H15" stroke="#5070a0" fill="none" stroke-width="1.5"/></svg>
<svg class="a" style="left:279px;top:811px" width="16" height="11" viewBox="0 0 16 11"><path d="M7 9L14 1" stroke="#2050b0" stroke-width="1.2"/><path d="M11 1H14V4" stroke="#2050b0" fill="none"/><path d="M1 11V7H3M12 11V7H15" stroke="#5070a0" fill="none" stroke-width="1.5"/></svg>
<div class="a" style="left:301px;top:810px;width:1px;height:12px;background:#999"></div>
<svg class="a" style="left:312px;top:812px" width="14" height="10" viewBox="0 0 14 10"><rect x="0.5" y="0.5" width="12" height="10" fill="#a8c8e8" stroke="#4070b0"/><rect x="3" y="5" width="7" height="1.5" fill="#2050a0"/></svg>
<svg class="a" style="left:341px;top:813px" width="12" height="8" viewBox="0 0 12 8"><path d="M0.5 0.5H11L5.75 6Z" fill="#fff" stroke="#555"/></svg>
<div class="a" style="left:368px;top:60px;width:1209px;height:762px;background:#cfdcec;border:1px solid #bcc0c8;border-bottom:none;border-radius:6px 6px 0 0"></div>
<div class="a" style="left:369px;top:61px;width:158px;height:28px;background:#fff;border-radius:6px 6px 0 0"></div>
<svg class="a" style="left:373px;top:68px" width="16" height="16"><use href="#ds"/></svg>
<div class="t" style="left:393px;top:69px;font-size:16.7px;line-height:16.7px;color:#000;">portal.datasetx</div>
<div class="a" style="left:527px;top:66px;width:1px;height:24px;background:#a9b2c2"></div>
<div class="a" style="left:527px;top:89px;width:1049px;height:1px;background:#a9b2c2"></div>
<svg class="a" style="left:510px;top:71px" width="11" height="11"><use href="#xclose"/></svg>
<svg class="a" style="left:1528px;top:67px" width="12" height="12"><use href="#minb"/></svg>
<svg class="a" style="left:1551px;top:68px" width="12" height="12"><use href="#maxb"/></svg>
<div class="a" style="left:369px;top:90px;width:1207px;height:732px;background:#fff"></div>
<div class="a" style="left:370px;top:92px;width:1204px;height:20px;background:#d0ddec"></div>
<div class="a" style="left:370px;top:112px;width:1204px;height:1px;background:#8a8a8a"></div>
<div class="t" style="left:371px;top:94px;font-size:17px;line-height:17px;color:#000;letter-spacing:0.1px">com.primeton.gocom.afcenter.model/src/com/primeton/gocom/afcenter/model/portal.datasetx</div>
<div class="a" style="left:370px;top:113px;width:124px;height:709px;background:#fff"></div>
<div class="a" style="left:371px;top:114px;width:121px;height:27px;background:linear-gradient(#ffffff,#e9e9e9)"></div>
<div class="a" style="left:371px;top:141px;width:121px;height:1px;background:#9a9a9a"></div>
<svg class="a" style="left:381px;top:123px" width="8" height="12" viewBox="0 0 8 12"><path d="M6.5 0.8L1 6L6.5 11.2Z" fill="#fff" stroke="#555" stroke-width="1"/></svg>
<svg class="a" style="left:402px;top:120px" width="16" height="16" viewBox="0 0 16 16"><circle cx="8" cy="8" r="7" fill="#eef0f4" stroke="#a8b0c0" stroke-width=".8"/><circle cx="5.5" cy="4" r="1.6" fill="#f0a020"/><circle cx="10" cy="3.8" r="1.6" fill="#40a030"/><circle cx="3.5" cy="7.5" r="1.6" fill="#f07010"/><circle cx="12.5" cy="7" r="1.6" fill="#20a020"/><circle cx="5.5" cy="11" r="1.6" fill="none" stroke="#e03040" stroke-width="1"/><circle cx="10" cy="11" r="1.6" fill="none" stroke="#2050d0" stroke-width="1"/></svg>
<div class="t" style="left:422px;top:120px;font-size:16px;line-height:16px;color:#000;">Palette</div>
<div class="a" style="left:385px;top:145px;width:93px;height:24px;background:#cfe2f7;border-radius:3px"></div>
<svg class="a" style="left:390px;top:147px" width="11" height="17" viewBox="0 0 11 17"><path d="M1 1V14L4 11L6.5 16L9 15L6.5 10H10.5Z" fill="#fff8d8" stroke="#555" stroke-width="1"/></svg>
<div class="t" style="left:406px;top:150px;font-size:16px;line-height:16px;color:#000;">Select</div>
<div class="a" style="left:374px;top:173px;width:115px;height:1px;background:#999"></div>
<div class="a" style="left:374px;top:174px;width:115px;height:1px;background:#e4e4e4"></div>
<svg class="a" style="left:386px;top:180px" width="17" height="10" viewBox="0 0 17 10"><path d="M0 4.5H11" stroke="#1a78f0" stroke-width="1.6"/><path d="M10 0L16.5 4.5L10 9Z" fill="#1a78f0"/></svg>
<div class="t" style="left:406px;top:182px;font-size:15px;line-height:15px;color:#000;">单向1:1关联</div>
<svg class="a" style="left:386px;top:207px" width="17" height="10" viewBox="0 0 17 10"><path d="M0 4.5H11" stroke="#d020c0" stroke-width="1.6"/><path d="M10 0L16.5 4.5L10 9Z" fill="#d020c0"/></svg>
<div class="t" style="left:406px;top:209px;font-size:15px;line-height:15px;color:#000;">单向1:n关联</div>
<svg class="a" style="left:386px;top:234px" width="17" height="10" viewBox="0 0 17 10"><path d="M0 4.5H11" stroke="#30b030" stroke-width="1.6"/><path d="M10 0L16.5 4.5L10 9Z" fill="#30b030"/></svg>
<div class="t" style="left:406px;top:236px;font-size:15px;line-height:15px;color:#000;">单向n:1关联</div>
<svg class="a" style="left:386px;top:262px" width="17" height="10" viewBox="0 0 17 10"><path d="M0 4.5H16" stroke="#d020c0" stroke-width="1.6"/></svg>
<div class="t" style="left:406px;top:263px;font-size:15px;line-height:15px;color:#000;">双向1:n关联</div>
<div class="a" style="left:371px;top:286px;width:121px;height:1px;background:#999"></div>
<div class="a" style="left:371px;top:287px;width:121px;height:1px;background:#e6e6e6"></div>
<div class="a" style="left:371px;top:288px;width:121px;height:24px;background:#ececec"></div>
<svg class="a" style="left:373px;top:293px" width="17" height="13" viewBox="0 0 17 13"><path d="M0.5 1.5H5.5L7 3H13V12.5H0.5Z" fill="#fbe3a8" stroke="#c88a30"/><path d="M0.5 12.5L3 5.5H16L13 12.5Z" fill="#fdf0c8" stroke="#c88a30" stroke-width=".9"/></svg>
<div class="t" style="left:392px;top:293px;font-size:15px;line-height:15px;color:#000;">基本</div>
<svg class="a" style="left:477px;top:296px" width="13" height="8" viewBox="0 0 13 8"><path d="M4 0.5L0.8 4L4 7.5M9 0.5L12.2 4L9 7.5M4 4H9" fill="none" stroke="#999" stroke-width="1"/></svg>
<svg class="a" style="left:387px;top:317px" width="16" height="16" viewBox="0 0 16 16"><rect x="0.5" y="0.5" width="13" height="12" fill="#fff" stroke="#3060c0"/><rect x="1" y="1" width="12" height="2.5" fill="#3070d0"/><path d="M1 6.5H13" stroke="#3060c0" stroke-width=".8"/><rect x="7.5" y="7" width="7.5" height="8.5" fill="#fff" stroke="#5080b0" stroke-width=".8"/><path d="M9 9.5H13.5M9 11.5H13.5M9 13.5H13.5" stroke="#5080b0" stroke-width=".8"/></svg>
<div class="t" style="left:406px;top:320px;font-size:15px;line-height:15px;color:#000;">实体</div>
<svg class="a" style="left:387px;top:344px" width="16" height="16" viewBox="0 0 16 16"><rect x="0.5" y="0.5" width="12" height="11" fill="#fff" stroke="#60a040"/><rect x="1" y="1" width="11" height="2.5" fill="#70c050"/><path d="M1 6H12" stroke="#60a040" stroke-width=".8"/><rect x="7.5" y="6" width="7.5" height="9.5" rx="2.2" fill="#f0b020" stroke="#b07010" stroke-width=".8"/></svg>
<div class="t" style="left:406px;top:347px;font-size:15px;line-height:15px;color:#000;">持久化实体</div>
<svg class="a" style="left:387px;top:371px" width="16" height="16" viewBox="0 0 16 16"><rect x="0.5" y="0.5" width="12" height="11" fill="#fff" stroke="#a040a0"/><rect x="1" y="1" width="11" height="2.5" fill="#b060c0"/><circle cx="10" cy="10" r="3" fill="#e8f0ff" stroke="#3070c0" stroke-width="1.2"/><path d="M12 12L15 15" stroke="#3070c0" stroke-width="1.6"/></svg>
<div class="t" style="left:406px;top:374px;font-size:15px;line-height:15px;color:#000;">查询实体</div>
<svg class="a" style="left:387px;top:398px" width="16" height="16" viewBox="0 0 16 16"><rect x="0.5" y="3.5" width="12" height="12" fill="#f8e080" stroke="#a08030"/><path d="M3 7H9M3 10H9" stroke="#a08030" stroke-width=".8"/><path d="M6 11L14 2L16 4L8 13L5.5 14Z" fill="#fff" stroke="#404040" stroke-width=".9"/><path d="M13 3L15 5" stroke="#d03030" stroke-width="1.5"/></svg>
<div class="t" style="left:406px;top:401px;font-size:15px;line-height:15px;color:#000;">注释</div>
<div class="a" style="left:494px;top:113px;width:1px;height:709px;background:#a0a0a0"></div>
<div class="a" style="left:495px;top:113px;width:17px;height:18px;background:#c9d9eb"></div>
<div class="a" style="left:1553px;top:113px;width:21px;height:18px;background:#c9d9eb"></div>
<div class="a" style="left:512px;top:113px;width:1041px;height:18px;background:#fff"></div>
<div class="a" style="left:512px;top:131px;width:1042px;height:1px;background:#a0a0a0"></div>
<div class="a" style="left:512px;top:129px;width:1041px;height:2px;background:#f0f0f0"></div>
<div class="a" style="left:512px;top:131px;width:1px;height:691px;background:#a0a0a0"></div>
<div class="a" style="left:495px;top:131px;width:17px;height:691px;background:#fff"></div>
<div class="a" style="left:510px;top:132px;width:2px;height:690px;background:#efefef"></div>
<svg class="a" style="left:513px;top:112px" width="1040" height="18" viewBox="0 0 1040 18"><rect x="15" y="9.5" width="1.5" height="1.5" fill="#000"/><rect x="30" y="9.5" width="1.5" height="1.5" fill="#000"/><rect x="45" y="9.5" width="1.5" height="1.5" fill="#000"/><rect x="60" y="8" width="1.5" height="3.5" fill="#000"/><rect x="75" y="9.5" width="1.5" height="1.5" fill="#000"/><rect x="90" y="9.5" width="1.5" height="1.5" fill="#000"/><rect x="105" y="9.5" width="1.5" height="1.5" fill="#000"/><rect x="135" y="9.5" width="1.5" height="1.5" fill="#000"/><rect x="150" y="9.5" width="1.5" height="1.5" fill="#000"/><rect x="165" y="9.5" width="1.5" height="1.5" fill="#000"/><rect x="180" y="8" width="1.5" height="3.5" fill="#000"/><rect x="195" y="9.5" width="1.5" height="1.5" fill="#000"/><rect x="210" y="9.5" width="1.5" height="1.5" fill="#000"/><rect x="225" y="9.5" width="1.5" height="1.5" fill="#000"/><rect x="255" y="9.5" width="1.5" height="1.5" fill="#000"/><rect x="270" y="9.5" width="1.5" height="1.5" fill="#000"/><rect x="285" y="9.5" width="1.5" height="1.5" fill="#000"/><rect x="300" y="8" width="1.5" height="3.5" fill="#000"/><rect x="315" y="9.5" width="1.5" height="1.5" fill="#000"/><rect x="330" y="9.5" width="1.5" height="1.5" fill="#000"/><rect x="345" y="9.5" width="1.5" height="1.5" fill="#000"/><rect x="375" y="9.5" width="1.5" height="1.5" fill="#000"/><rect x="390" y="9.5" width="1.5" height="1.5" fill="#000"/><rect x="405" y="9.5" width="1.5" height="1.5" fill="#000"/><rect x="420" y="8" width="1.5" height="3.5" fill="#000"/><rect x="435" y="9.5" width="1.5" height="1.5" fill="#000"/><rect x="450" y="9.5" width="1.5" height="1.5" fill="#000"/><rect x="465" y="9.5" width="1.5" height="1.5" fill="#000"/><rect x="495" y="9.5" width="1.5" height="1.5" fill="#000"/><rect x="510" y="9.5" width="1.5" height="1.5" fill="#000"/><rect x="525" y="9.5" width="1.5" height="1.5" fill="#000"/><rect x="540" y="8" width="1.5" height="3.5" fill="#000"/><rect x="555" y="9.5" width="1.5" height="1.5" fill="#000"/><rect x="570" y="9.5" width="1.5" height="1.5" fill="#000"/><rect x="585" y="9.5" width="1.5" height="1.5" fill="#000"/><rect x="615" y="9.5" width="1.5" height="1.5" fill="#000"/><rect x="630" y="9.5" width="1.5" height="1.5" fill="#000"/><rect x="645" y="9.5" width="1.5" height="1.5" fill="#000"/><rect x="660" y="8" width="1.5" height="3.5" fill="#000"/><rect x="675" y="9.5" width="1.5" height="1.5" fill="#000"/><rect x="690" y="9.5" width="1.5" height="1.5" fill="#000"/><rect x="705" y="9.5" width="1.5" height="1.5" fill="#000"/><rect x="735" y="9.5" width="1.5" height="1.5" fill="#000"/><rect x="750" y="9.5" width="1.5" height="1.5" fill="#000"/><rect x="765" y="9.5" width="1.5" height="1.5" fill="#000"/><rect x="780" y="8" width="1.5" height="3.5" fill="#000"/><rect x="795" y="9.5" width="1.5" height="1.5" fill="#000"/><rect x="810" y="9.5" width="1.5" height="1.5" fill="#000"/><rect x="825" y="9.5" width="1.5" height="1.5" fill="#000"/><rect x="855" y="9.5" width="1.5" height="1.5" fill="#000"/><rect x="870" y="9.5" width="1.5" height="1.5" fill="#000"/><rect x="885" y="9.5" width="1.5" height="1.5" fill="#000"/><rect x="900" y="8" width="1.5" height="3.5" fill="#000"/><rect x="915" y="9.5" width="1.5" height="1.5" fill="#000"/><rect x="930" y="9.5" width="1.5" height="1.5" fill="#000"/><rect x="945" y="9.5" width="1.5" height="1.5" fill="#000"/><rect x="975" y="9.5" width="1.5" height="1.5" fill="#000"/><rect x="990" y="9.5" width="1.5" height="1.5" fill="#000"/><rect x="1005" y="9.5" width="1.5" height="1.5" fill="#000"/><rect x="1020" y="8" width="1.5" height="3.5" fill="#000"/><rect x="1035" y="9.5" width="1.5" height="1.5" fill="#000"/></svg>
<div class="a" style="left:512px;top:113px;width:1041px;height:18px;overflow:hidden">
<div class="t" style="left:-5px;top:1px;font-size:14px;line-height:14px;color:#000;background:#fff;padding:0 2px;height:18px">0</div>
<div class="t" style="left:115px;top:1px;font-size:14px;line-height:14px;color:#000;background:#fff;padding:0 2px;height:18px">1</div>
<div class="t" style="left:235px;top:1px;font-size:14px;line-height:14px;color:#000;background:#fff;padding:0 2px;height:18px">2</div>
<div class="t" style="left:355px;top:1px;font-size:14px;line-height:14px;color:#000;background:#fff;padding:0 2px;height:18px">3</div>
<div class="t" style="left:475px;top:1px;font-size:14px;line-height:14px;color:#000;background:#fff;padding:0 2px;height:18px">4</div>
<div class="t" style="left:595px;top:1px;font-size:14px;line-height:14px;color:#000;background:#fff;padding:0 2px;height:18px">5</div>
<div class="t" style="left:715px;top:1px;font-size:14px;line-height:14px;color:#000;background:#fff;padding:0 2px;height:18px">6</div>
<div class="t" style="left:835px;top:1px;font-size:14px;line-height:14px;color:#000;background:#fff;padding:0 2px;height:18px">7</div>
<div class="t" style="left:955px;top:1px;font-size:14px;line-height:14px;color:#000;background:#fff;padding:0 2px;height:18px">8</div>
</div>
<svg class="a" style="left:500px;top:132px" width="8" height="690" viewBox="0 0 8 690"><rect x="2" y="6" width="2" height="1.2" fill="#000"/><rect x="2" y="21" width="2" height="1.2" fill="#000"/><rect x="2" y="51" width="2" height="1.2" fill="#000"/><rect x="2" y="66" width="2" height="1.2" fill="#000"/><rect x="2" y="81" width="2" height="1.2" fill="#000"/><rect x="0.5" y="96" width="3.5" height="1.2" fill="#000"/><rect x="2" y="111" width="2" height="1.2" fill="#000"/><rect x="2" y="126" width="2" height="1.2" fill="#000"/><rect x="2" y="141" width="2" height="1.2" fill="#000"/><rect x="2" y="171" width="2" height="1.2" fill="#000"/><rect x="2" y="186" width="2" height="1.2" fill="#000"/><rect x="2" y="201" width="2" height="1.2" fill="#000"/><rect x="0.5" y="216" width="3.5" height="1.2" fill="#000"/><rect x="2" y="231" width="2" height="1.2" fill="#000"/><rect x="2" y="246" width="2" height="1.2" fill="#000"/><rect x="2" y="261" width="2" height="1.2" fill="#000"/><rect x="2" y="291" width="2" height="1.2" fill="#000"/><rect x="2" y="306" width="2" height="1.2" fill="#000"/><rect x="2" y="321" width="2" height="1.2" fill="#000"/><rect x="0.5" y="336" width="3.5" height="1.2" fill="#000"/><rect x="2" y="351" width="2" height="1.2" fill="#000"/><rect x="2" y="366" width="2" height="1.2" fill="#000"/><rect x="2" y="381" width="2" height="1.2" fill="#000"/><rect x="2" y="411" width="2" height="1.2" fill="#000"/><rect x="2" y="426" width="2" height="1.2" fill="#000"/><rect x="2" y="441" width="2" height="1.2" fill="#000"/><rect x="0.5" y="456" width="3.5" height="1.2" fill="#000"/><rect x="2" y="471" width="2" height="1.2" fill="#000"/><rect x="2" y="486" width="2" height="1.2" fill="#000"/><rect x="2" y="501" width="2" height="1.2" fill="#000"/><rect x="2" y="531" width="2" height="1.2" fill="#000"/><rect x="2" y="546" width="2" height="1.2" fill="#000"/><rect x="2" y="561" width="2" height="1.2" fill="#000"/><rect x="0.5" y="576" width="3.5" height="1.2" fill="#000"/><rect x="2" y="591" width="2" height="1.2" fill="#000"/><rect x="2" y="606" width="2" height="1.2" fill="#000"/><rect x="2" y="621" width="2" height="1.2" fill="#000"/><rect x="2" y="651" width="2" height="1.2" fill="#000"/><rect x="2" y="666" width="2" height="1.2" fill="#000"/><rect x="2" y="681" width="2" height="1.2" fill="#000"/></svg>
<div class="t" style="left:504px;top:164px;background:#fff;font-size:14px;line-height:8px;width:8px;height:8px;transform:rotate(-90deg);transform-origin:4px 4px">4</div>
<div class="t" style="left:504px;top:284px;background:#fff;font-size:14px;line-height:8px;width:8px;height:8px;transform:rotate(-90deg);transform-origin:4px 4px">5</div>
<div class="t" style="left:504px;top:404px;background:#fff;font-size:14px;line-height:8px;width:8px;height:8px;transform:rotate(-90deg);transform-origin:4px 4px">6</div>
<div class="t" style="left:504px;top:524px;background:#fff;font-size:14px;line-height:8px;width:8px;height:8px;transform:rotate(-90deg);transform-origin:4px 4px">7</div>
<div class="t" style="left:504px;top:644px;background:#fff;font-size:14px;line-height:8px;width:8px;height:8px;transform:rotate(-90deg);transform-origin:4px 4px">8</div>
<div class="t" style="left:504px;top:764px;background:#fff;font-size:14px;line-height:8px;width:8px;height:8px;transform:rotate(-90deg);transform-origin:4px 4px">9</div>
<div class="a" style="left:1554px;top:131px;width:20px;height:691px;background:#f0f0f0"></div>
<div class="a" style="left:1554px;top:355px;width:19px;height:406px;background:#cdcdcd"></div>
<svg class="a" style="left:1558px;top:139px" width="12" height="8" viewBox="0 0 12 8"><path d="M1 6.5L6 1.5L11 6.5" fill="none" stroke="#555" stroke-width="1.8"/></svg>
<svg width="0" height="0" style="position:absolute"><defs><symbol id="attr2" viewBox="0 0 10 11" shape-rendering="crispEdges"><rect x="0" y="0" width="4" height="3" fill="#111"/><rect x="0" y="4" width="4" height="3" fill="#111"/><rect x="0" y="8" width="4" height="3" fill="#111"/><rect x="1" y="1" width="2" height="1" fill="#5ab05a"/><rect x="1" y="5" width="2" height="1" fill="#5ab05a"/><rect x="1" y="9" width="2" height="1" fill="#5ab05a"/><rect x="6" y="2" width="3" height="1" fill="#111"/><rect x="6" y="6" width="3" height="1" fill="#111"/><rect x="6" y="10" width="3" height="1" fill="#111"/></symbol><symbol id="key2" viewBox="0 0 15 14"><circle cx="10.8" cy="4.3" r="3.6" fill="#f6dc40" stroke="#b89018" stroke-width="1"/><circle cx="11.2" cy="4.3" r="1" fill="#806010"/><path d="M0.5 3.5H7.5V6H4.5V7.5H3V6H0.5Z" fill="#f6dc40" stroke="#b89018" stroke-width=".8"/><rect x="2" y="10" width="4" height="3" fill="#111" shape-rendering="crispEdges"/><rect x="8" y="10" width="4" height="3" fill="#111" shape-rendering="crispEdges"/><rect x="3" y="11" width="2" height="1" fill="#5ab05a" shape-rendering="crispEdges"/><rect x="9" y="11" width="2" height="1" fill="#5ab05a" shape-rendering="crispEdges"/></symbol><symbol id="ent2" viewBox="0 0 13 12"><rect x="0.5" y="0.5" width="9" height="8.5" fill="#f4faec" stroke="#58a830"/><rect x="1" y="1" width="8" height="2" fill="#70c040"/><rect x="1" y="4.5" width="8" height="1.5" fill="#a8d890"/><rect x="5.5" y="2.5" width="7" height="9" rx="2" fill="#f0b818" stroke="#a87810" stroke-width=".8"/><rect x="8" y="4" width="2.5" height="6.5" fill="#f8e070"/></symbol></defs></svg>
<div class="a" style="left:512px;top:132px;width:1042px;height:690px;overflow:hidden">
<div class="a" style="left:61px;top:-32px;width:150px;height:56px;border:1px solid #6aaa2a;background:#fff"></div>
<div class="a" style="left:62px;top:-31px;width:148px;height:54px;overflow:hidden">
<svg class="a" style="left:6px;top:9px" width="10" height="11"><use href="#attr2"/></svg>
<div class="t" style="left:22px;top:6px;font-size:16.7px;line-height:16.7px;color:#000;">createDate</div>
<div class="t" style="left:121px;top:6px;font-size:16.7px;line-height:16.7px;color:#000;letter-spacing:-0.8px">:...</div>
<svg class="a" style="left:6px;top:31px" width="10" height="11"><use href="#attr2"/></svg>
<div class="t" style="left:22px;top:28px;font-size:16.7px;line-height:16.7px;color:#000;letter-spacing:-0.5px">oldDataJson</div>
<div class="t" style="left:118px;top:28px;font-size:16.7px;line-height:16.7px;color:#000;letter-spacing:-0.8px">:S...</div>
<svg class="a" style="left:6px;top:53px" width="10" height="11"><use href="#attr2"/></svg>
<div class="t" style="left:22px;top:50px;font-size:16.7px;line-height:16.7px;color:#000;">createDate</div>
<div class="t" style="left:121px;top:50px;font-size:16.7px;line-height:16.7px;color:#000;letter-spacing:-0.8px">:...</div>
</div>
<div class="a" style="left:61px;top:84px;width:150px;height:210px;border:1px solid #6aaa2a;background:#fff"></div>
<svg class="a" style="left:76px;top:98px" width="13" height="12"><use href="#ent2"/></svg>
<div class="t" style="left:96px;top:96px;font-size:16.7px;line-height:16.7px;color:#000;">OperationLog</div>
<svg class="a" style="left:63px;top:113px" width="146" height="2" viewBox="0 0 146 2"><rect x="0" y="0" width="1" height="1" fill="#8a8a8a"/><rect x="3" y="0" width="1" height="1" fill="#8a8a8a"/><rect x="6" y="0" width="1" height="1" fill="#8a8a8a"/><rect x="9" y="0" width="1" height="1" fill="#8a8a8a"/><rect x="12" y="0" width="1" height="1" fill="#8a8a8a"/><rect x="15" y="0" width="1" height="1" fill="#8a8a8a"/><rect x="18" y="0" width="1" height="1" fill="#8a8a8a"/><rect x="21" y="0" width="1" height="1" fill="#8a8a8a"/><rect x="24" y="0" width="1" height="1" fill="#8a8a8a"/><rect x="27" y="0" width="1" height="1" fill="#8a8a8a"/><rect x="30" y="0" width="1" height="1" fill="#8a8a8a"/><rect x="33" y="0" width="1" height="1" fill="#8a8a8a"/><rect x="36" y="0" width="1" height="1" fill="#8a8a8a"/><rect x="39" y="0" width="1" height="1" fill="#8a8a8a"/><rect x="42" y="0" width="1" height="1" fill="#8a8a8a"/><rect x="45" y="0" width="1" height="1" fill="#8a8a8a"/><rect x="48" y="0" width="1" height="1" fill="#8a8a8a"/><rect x="51" y="0" width="1" height="1" fill="#8a8a8a"/><rect x="54" y="0" width="1" height="1" fill="#8a8a8a"/><rect x="57" y="0" width="1" height="1" fill="#8a8a8a"/><rect x="60" y="0" width="1" height="1" fill="#8a8a8a"/><rect x="63" y="0" width="1" height="1" fill="#8a8a8a"/><rect x="66" y="0" width="1" height="1" fill="#8a8a8a"/><rect x="69" y="0" width="1" height="1" fill="#8a8a8a"/><rect x="72" y="0" width="1" height="1" fill="#8a8a8a"/><rect x="75" y="0" width="1" height="1" fill="#8a8a8a"/><rect x="78" y="0" width="1" height="1" fill="#8a8a8a"/><rect x="81" y="0" width="1" height="1" fill="#8a8a8a"/><rect x="84" y="0" width="1" height="1" fill="#8a8a8a"/><rect x="87" y="0" width="1" height="1" fill="#8a8a8a"/><rect x="90" y="0" width="1" height="1" fill="#8a8a8a"/><rect x="93" y="0" width="1" height="1" fill="#8a8a8a"/><rect x="96" y="0" width="1" height="1" fill="#8a8a8a"/><rect x="99" y="0" width="1" height="1" fill="#8a8a8a"/><rect x="102" y="0" width="1" height="1" fill="#8a8a8a"/><rect x="105" y="0" width="1" height="1" fill="#8a8a8a"/><rect x="108" y="0" width="1" height="1" fill="#8a8a8a"/><rect x="111" y="0" width="1" height="1" fill="#8a8a8a"/><rect x="114" y="0" width="1" height="1" fill="#8a8a8a"/><rect x="117" y="0" width="1" height="1" fill="#8a8a8a"/><rect x="120" y="0" width="1" height="1" fill="#8a8a8a"/><rect x="123" y="0" width="1" height="1" fill="#8a8a8a"/><rect x="126" y="0" width="1" height="1" fill="#8a8a8a"/><rect x="129" y="0" width="1" height="1" fill="#8a8a8a"/><rect x="132" y="0" width="1" height="1" fill="#8a8a8a"/><rect x="135" y="0" width="1" height="1" fill="#8a8a8a"/><rect x="138" y="0" width="1" height="1" fill="#8a8a8a"/><rect x="141" y="0" width="1" height="1" fill="#8a8a8a"/><rect x="144" y="0" width="1" height="1" fill="#8a8a8a"/></svg>
<div class="a" style="left:62px;top:85px;width:148px;height:208px;overflow:hidden">
<svg class="a" style="left:3px;top:34px" width="15" height="14"><use href="#key2"/></svg>
<div class="t" style="left:22px;top:34px;font-size:16.7px;line-height:16.7px;color:#000;">id</div>
<div class="t" style="left:43px;top:34px;font-size:16.7px;line-height:16.7px;color:#000;">:String</div>
<svg class="a" style="left:6px;top:59px" width="10" height="11"><use href="#attr2"/></svg>
<div class="t" style="left:22px;top:56px;font-size:16.7px;line-height:16.7px;color:#000;">operatorCode</div>
<div class="t" style="left:133px;top:56px;font-size:16.7px;line-height:16.7px;color:#000;letter-spacing:-0.8px">...</div>
<svg class="a" style="left:6px;top:81px" width="10" height="11"><use href="#attr2"/></svg>
<div class="t" style="left:22px;top:78px;font-size:16.7px;line-height:16.7px;color:#000;">operatorName</div>
<div class="t" style="left:133px;top:78px;font-size:16.7px;line-height:16.7px;color:#000;letter-spacing:-0.8px">...</div>
<svg class="a" style="left:6px;top:103px" width="10" height="11"><use href="#attr2"/></svg>
<div class="t" style="left:22px;top:100px;font-size:16.7px;line-height:16.7px;color:#000;">operateType</div>
<div class="t" style="left:123px;top:100px;font-size:16.7px;line-height:16.7px;color:#000;letter-spacing:-0.8px">:...</div>
<svg class="a" style="left:6px;top:125px" width="10" height="11"><use href="#attr2"/></svg>
<div class="t" style="left:22px;top:122px;font-size:16.7px;line-height:16.7px;color:#000;">operateDate</div>
<div class="t" style="left:121px;top:122px;font-size:16.7px;line-height:16.7px;color:#000;letter-spacing:-0.8px">:...</div>
<svg class="a" style="left:6px;top:147px" width="10" height="11"><use href="#attr2"/></svg>
<div class="t" style="left:22px;top:144px;font-size:16.7px;line-height:16.7px;color:#000;">targetType</div>
<div class="t" style="left:110px;top:144px;font-size:16.7px;line-height:16.7px;color:#000;letter-spacing:-0.8px">:St...</div>
<svg class="a" style="left:6px;top:169px" width="10" height="11"><use href="#attr2"/></svg>
<div class="t" style="left:22px;top:166px;font-size:16.7px;line-height:16.7px;color:#000;">targetModelId</div>
<div class="t" style="left:132px;top:166px;font-size:16.7px;line-height:16.7px;color:#000;letter-spacing:-0.8px">...</div>
<svg class="a" style="left:6px;top:191px" width="10" height="11"><use href="#attr2"/></svg>
<div class="t" style="left:22px;top:188px;font-size:16.7px;line-height:16.7px;color:#000;">targetModelN</div>
<div class="t" style="left:128px;top:188px;font-size:16.7px;line-height:16.7px;color:#000;letter-spacing:-0.8px">...</div>
</div>
<div class="a" style="left:61px;top:355px;width:150px;height:209px;border:1px solid #6aaa2a;background:#fff"></div>
<svg class="a" style="left:70px;top:368px" width="13" height="12"><use href="#ent2"/></svg>
<div class="t" style="left:90px;top:366px;font-size:16.7px;line-height:16.7px;color:#000;">OperationLog...</div>
<svg class="a" style="left:63px;top:383px" width="146" height="2" viewBox="0 0 146 2"><rect x="0" y="0" width="1" height="1" fill="#8a8a8a"/><rect x="3" y="0" width="1" height="1" fill="#8a8a8a"/><rect x="6" y="0" width="1" height="1" fill="#8a8a8a"/><rect x="9" y="0" width="1" height="1" fill="#8a8a8a"/><rect x="12" y="0" width="1" height="1" fill="#8a8a8a"/><rect x="15" y="0" width="1" height="1" fill="#8a8a8a"/><rect x="18" y="0" width="1" height="1" fill="#8a8a8a"/><rect x="21" y="0" width="1" height="1" fill="#8a8a8a"/><rect x="24" y="0" width="1" height="1" fill="#8a8a8a"/><rect x="27" y="0" width="1" height="1" fill="#8a8a8a"/><rect x="30" y="0" width="1" height="1" fill="#8a8a8a"/><rect x="33" y="0" width="1" height="1" fill="#8a8a8a"/><rect x="36" y="0" width="1" height="1" fill="#8a8a8a"/><rect x="39" y="0" width="1" height="1" fill="#8a8a8a"/><rect x="42" y="0" width="1" height="1" fill="#8a8a8a"/><rect x="45" y="0" width="1" height="1" fill="#8a8a8a"/><rect x="48" y="0" width="1" height="1" fill="#8a8a8a"/><rect x="51" y="0" width="1" height="1" fill="#8a8a8a"/><rect x="54" y="0" width="1" height="1" fill="#8a8a8a"/><rect x="57" y="0" width="1" height="1" fill="#8a8a8a"/><rect x="60" y="0" width="1" height="1" fill="#8a8a8a"/><rect x="63" y="0" width="1" height="1" fill="#8a8a8a"/><rect x="66" y="0" width="1" height="1" fill="#8a8a8a"/><rect x="69" y="0" width="1" height="1" fill="#8a8a8a"/><rect x="72" y="0" width="1" height="1" fill="#8a8a8a"/><rect x="75" y="0" width="1" height="1" fill="#8a8a8a"/><rect x="78" y="0" width="1" height="1" fill="#8a8a8a"/><rect x="81" y="0" width="1" height="1" fill="#8a8a8a"/><rect x="84" y="0" width="1" height="1" fill="#8a8a8a"/><rect x="87" y="0" width="1" height="1" fill="#8a8a8a"/><rect x="90" y="0" width="1" height="1" fill="#8a8a8a"/><rect x="93" y="0" width="1" height="1" fill="#8a8a8a"/><rect x="96" y="0" width="1" height="1" fill="#8a8a8a"/><rect x="99" y="0" width="1" height="1" fill="#8a8a8a"/><rect x="102" y="0" width="1" height="1" fill="#8a8a8a"/><rect x="105" y="0" width="1" height="1" fill="#8a8a8a"/><rect x="108" y="0" width="1" height="1" fill="#8a8a8a"/><rect x="111" y="0" width="1" height="1" fill="#8a8a8a"/><rect x="114" y="0" width="1" height="1" fill="#8a8a8a"/><rect x="117" y="0" width="1" height="1" fill="#8a8a8a"/><rect x="120" y="0" width="1" height="1" fill="#8a8a8a"/><rect x="123" y="0" width="1" height="1" fill="#8a8a8a"/><rect x="126" y="0" width="1" height="1" fill="#8a8a8a"/><rect x="129" y="0" width="1" height="1" fill="#8a8a8a"/><rect x="132" y="0" width="1" height="1" fill="#8a8a8a"/><rect x="135" y="0" width="1" height="1" fill="#8a8a8a"/><rect x="138" y="0" width="1" height="1" fill="#8a8a8a"/><rect x="141" y="0" width="1" height="1" fill="#8a8a8a"/><rect x="144" y="0" width="1" height="1" fill="#8a8a8a"/></svg>
<div class="a" style="left:62px;top:356px;width:148px;height:207px;overflow:hidden">
<svg class="a" style="left:3px;top:33px" width="15" height="14"><use href="#key2"/></svg>
<div class="t" style="left:22px;top:33px;font-size:16.7px;line-height:16.7px;color:#000;">id</div>
<div class="t" style="left:43px;top:33px;font-size:16.7px;line-height:16.7px;color:#000;">:String</div>
<svg class="a" style="left:6px;top:58px" width="10" height="11"><use href="#attr2"/></svg>
<div class="t" style="left:22px;top:55px;font-size:16.7px;line-height:16.7px;color:#000;">operatorCode</div>
<div class="t" style="left:133px;top:55px;font-size:16.7px;line-height:16.7px;color:#000;letter-spacing:-0.8px">...</div>
<svg class="a" style="left:6px;top:80px" width="10" height="11"><use href="#attr2"/></svg>
<div class="t" style="left:22px;top:77px;font-size:16.7px;line-height:16.7px;color:#000;">operatorName</div>
<div class="t" style="left:133px;top:77px;font-size:16.7px;line-height:16.7px;color:#000;letter-spacing:-0.8px">...</div>
<svg class="a" style="left:6px;top:102px" width="10" height="11"><use href="#attr2"/></svg>
<div class="t" style="left:22px;top:99px;font-size:16.7px;line-height:16.7px;color:#000;">operateType</div>
<div class="t" style="left:123px;top:99px;font-size:16.7px;line-height:16.7px;color:#000;letter-spacing:-0.8px">:...</div>
<svg class="a" style="left:6px;top:124px" width="10" height="11"><use href="#attr2"/></svg>
<div class="t" style="left:22px;top:121px;font-size:16.7px;line-height:16.7px;color:#000;">operateDate</div>
<div class="t" style="left:121px;top:121px;font-size:16.7px;line-height:16.7px;color:#000;letter-spacing:-0.8px">:...</div>
<svg class="a" style="left:6px;top:146px" width="10" height="11"><use href="#attr2"/></svg>
<div class="t" style="left:22px;top:143px;font-size:16.7px;line-height:16.7px;color:#000;">targetType</div>
<div class="t" style="left:110px;top:143px;font-size:16.7px;line-height:16.7px;color:#000;letter-spacing:-0.8px">:St...</div>
<svg class="a" style="left:6px;top:168px" width="10" height="11"><use href="#attr2"/></svg>
<div class="t" style="left:22px;top:165px;font-size:16.7px;line-height:16.7px;color:#000;">targetModelId</div>
<div class="t" style="left:132px;top:165px;font-size:16.7px;line-height:16.7px;color:#000;letter-spacing:-0.8px">...</div>
<svg class="a" style="left:6px;top:190px" width="10" height="11"><use href="#attr2"/></svg>
<div class="t" style="left:22px;top:187px;font-size:16.7px;line-height:16.7px;color:#000;">targetModelN</div>
<div class="t" style="left:128px;top:187px;font-size:16.7px;line-height:16.7px;color:#000;letter-spacing:-0.8px">...</div>
</div>
<div class="a" style="left:61px;top:625px;width:150px;height:144px;border:1px solid #6aaa2a;background:#fff"></div>
<svg class="a" style="left:87px;top:638px" width="13" height="12"><use href="#ent2"/></svg>
<div class="t" style="left:107px;top:636px;font-size:16.7px;line-height:16.7px;color:#000;">OnlineUser</div>
<svg class="a" style="left:63px;top:653px" width="146" height="2" viewBox="0 0 146 2"><rect x="0" y="0" width="1" height="1" fill="#8a8a8a"/><rect x="3" y="0" width="1" height="1" fill="#8a8a8a"/><rect x="6" y="0" width="1" height="1" fill="#8a8a8a"/><rect x="9" y="0" width="1" height="1" fill="#8a8a8a"/><rect x="12" y="0" width="1" height="1" fill="#8a8a8a"/><rect x="15" y="0" width="1" height="1" fill="#8a8a8a"/><rect x="18" y="0" width="1" height="1" fill="#8a8a8a"/><rect x="21" y="0" width="1" height="1" fill="#8a8a8a"/><rect x="24" y="0" width="1" height="1" fill="#8a8a8a"/><rect x="27" y="0" width="1" height="1" fill="#8a8a8a"/><rect x="30" y="0" width="1" height="1" fill="#8a8a8a"/><rect x="33" y="0" width="1" height="1" fill="#8a8a8a"/><rect x="36" y="0" width="1" height="1" fill="#8a8a8a"/><rect x="39" y="0" width="1" height="1" fill="#8a8a8a"/><rect x="42" y="0" width="1" height="1" fill="#8a8a8a"/><rect x="45" y="0" width="1" height="1" fill="#8a8a8a"/><rect x="48" y="0" width="1" height="1" fill="#8a8a8a"/><rect x="51" y="0" width="1" height="1" fill="#8a8a8a"/><rect x="54" y="0" width="1" height="1" fill="#8a8a8a"/><rect x="57" y="0" width="1" height="1" fill="#8a8a8a"/><rect x="60" y="0" width="1" height="1" fill="#8a8a8a"/><rect x="63" y="0" width="1" height="1" fill="#8a8a8a"/><rect x="66" y="0" width="1" height="1" fill="#8a8a8a"/><rect x="69" y="0" width="1" height="1" fill="#8a8a8a"/><rect x="72" y="0" width="1" height="1" fill="#8a8a8a"/><rect x="75" y="0" width="1" height="1" fill="#8a8a8a"/><rect x="78" y="0" width="1" height="1" fill="#8a8a8a"/><rect x="81" y="0" width="1" height="1" fill="#8a8a8a"/><rect x="84" y="0" width="1" height="1" fill="#8a8a8a"/><rect x="87" y="0" width="1" height="1" fill="#8a8a8a"/><rect x="90" y="0" width="1" height="1" fill="#8a8a8a"/><rect x="93" y="0" width="1" height="1" fill="#8a8a8a"/><rect x="96" y="0" width="1" height="1" fill="#8a8a8a"/><rect x="99" y="0" width="1" height="1" fill="#8a8a8a"/><rect x="102" y="0" width="1" height="1" fill="#8a8a8a"/><rect x="105" y="0" width="1" height="1" fill="#8a8a8a"/><rect x="108" y="0" width="1" height="1" fill="#8a8a8a"/><rect x="111" y="0" width="1" height="1" fill="#8a8a8a"/><rect x="114" y="0" width="1" height="1" fill="#8a8a8a"/><rect x="117" y="0" width="1" height="1" fill="#8a8a8a"/><rect x="120" y="0" width="1" height="1" fill="#8a8a8a"/><rect x="123" y="0" width="1" height="1" fill="#8a8a8a"/><rect x="126" y="0" width="1" height="1" fill="#8a8a8a"/><rect x="129" y="0" width="1" height="1" fill="#8a8a8a"/><rect x="132" y="0" width="1" height="1" fill="#8a8a8a"/><rect x="135" y="0" width="1" height="1" fill="#8a8a8a"/><rect x="138" y="0" width="1" height="1" fill="#8a8a8a"/><rect x="141" y="0" width="1" height="1" fill="#8a8a8a"/><rect x="144" y="0" width="1" height="1" fill="#8a8a8a"/></svg>
<div class="a" style="left:62px;top:626px;width:148px;height:142px;overflow:hidden">
<svg class="a" style="left:3px;top:33px" width="15" height="14"><use href="#key2"/></svg>
<div class="t" style="left:22px;top:33px;font-size:16.7px;line-height:16.7px;color:#000;">id</div>
<div class="t" style="left:43px;top:33px;font-size:16.7px;line-height:16.7px;color:#000;">:String</div>
<svg class="a" style="left:6px;top:58px" width="10" height="11"><use href="#attr2"/></svg>
<div class="t" style="left:22px;top:55px;font-size:16.7px;line-height:16.7px;color:#000;">onlineCode</div>
<div class="t" style="left:110px;top:55px;font-size:16.7px;line-height:16.7px;color:#000;letter-spacing:-0.8px">:St...</div>
</div>
</div>
<div class="a" style="left:1581px;top:60px;width:225px;height:762px;background:#fff;border-radius:6px 0 0 0;overflow:hidden"></div>
<div class="a" style="left:1581px;top:60px;width:225px;height:29px;background:#f3f5fa;border-radius:6px 0 0 0"></div>
<div class="a" style="left:1581px;top:60px;width:94px;height:29px;background:linear-gradient(#d6dee9,#fafbfd);border-radius:6px 6px 0 0"></div>
<svg class="a" style="left:1587px;top:68px" width="16" height="16" viewBox="0 0 16 16"><path d="M3 1H12" stroke="#c09030" stroke-width="1.6"/><path d="M3.5 2L1 11M11.5 2L14 11" stroke="#707880" stroke-width="1.2" fill="none"/><rect x="0.5" y="11" width="8" height="2.5" fill="#30a040"/><rect x="0.5" y="13.5" width="8" height="2.5" fill="#d05020"/><rect x="8.5" y="8.5" width="7" height="7.5" fill="#f8f8f0" stroke="#908060" stroke-width=".9"/><path d="M10.5 11H13.5M10.5 13.5H12" stroke="#3060c0" stroke-width=".9"/></svg>
<div class="t" style="left:1606px;top:69px;font-size:15px;line-height:15px;color:#000;">构件...</div>
<svg class="a" style="left:1657px;top:71px" width="11" height="11"><use href="#xclose"/></svg>
<svg class="a" style="left:1679px;top:68px" width="17" height="16" viewBox="0 0 17 16"><circle cx="3" cy="3" r="2.5" fill="#70b880"/><path d="M3 3L10 8" stroke="#c8c8c8"/><rect x="6.5" y="7" width="9" height="6.5" rx="1" fill="#e8f0f8" stroke="#a0a8b0"/><rect x="8" y="8.5" width="6" height="3.5" fill="#90b8e0"/><path d="M9 15.5H13M11 13.5V15.5" stroke="#a0a8b0"/></svg>
<div class="t" style="left:1699px;top:69px;font-size:15px;line-height:15px;color:#777;">业务...</div>
<svg class="a" style="left:1752px;top:68px" width="16" height="16" viewBox="0 0 16 16"><circle cx="7.5" cy="8" r="7" fill="#f0c050"/><path d="M1 8A6.5 6.5 0 0 1 7 1.5V14.5A6.5 6.5 0 0 1 1 8Z" fill="#90c880"/><circle cx="9.5" cy="7" r="2.8" fill="#909090"/><path d="M4.5 16Q5 10.5 9.5 10.5T14.5 16Z" fill="#606870"/></svg>
<div class="t" style="left:1771px;top:69px;font-size:15px;line-height:15px;color:#777;">组织...</div>
<svg class="a" style="left:1775px;top:96px" width="17" height="16" viewBox="0 0 17 16"><path d="M4.5 2.5Q4.5 0.5 6.5 0.5H8.5L9.5 2H15Q16.5 2 16.5 3.5V12.5H4.5Z" fill="#f8d890" stroke="#c08a30"/><rect x="1.5" y="6" width="6" height="8.5" fill="#70b0e8" stroke="#2050a0"/><path d="M0 8H1.5M0 10.5H1.5M0 13H1.5M7.5 8H9M7.5 10.5H9M7.5 13H9" stroke="#2050a0"/></svg>
<div class="a" style="left:1795px;top:92px;width:13px;height:22px;background:#d5e6f8;border:1px solid #98c0e8"></div>
<svg class="a" style="left:1798px;top:96px" width="12" height="16" viewBox="0 0 12 16"><path d="M0.5 2.5Q0.5 0.5 2.5 0.5H4.5L5.5 2H11Q12.5 2 12.5 3.5V12.5H0.5Z" fill="#f8d890" stroke="#c08a30"/></svg>
<div class="a" style="left:1589px;top:119px;width:230px;height:26px;background:#fff;border:1px solid #7a7a7a"></div>
<div class="a" style="left:1589px;top:154px;width:230px;height:680px;background:#fff;border:1px solid #a6a9b3"></div>
<svg class="a" style="left:1599px;top:163px" width="8" height="10"><use href="#chev"/></svg>
<svg class="a" style="left:1614px;top:160px" width="16" height="16"><use href="#proj"/></svg>
<div class="t" style="left:1635px;top:160px;font-size:17px;line-height:17px;color:#000;">com.primeton.eos.foundation</div>
</body></html>
